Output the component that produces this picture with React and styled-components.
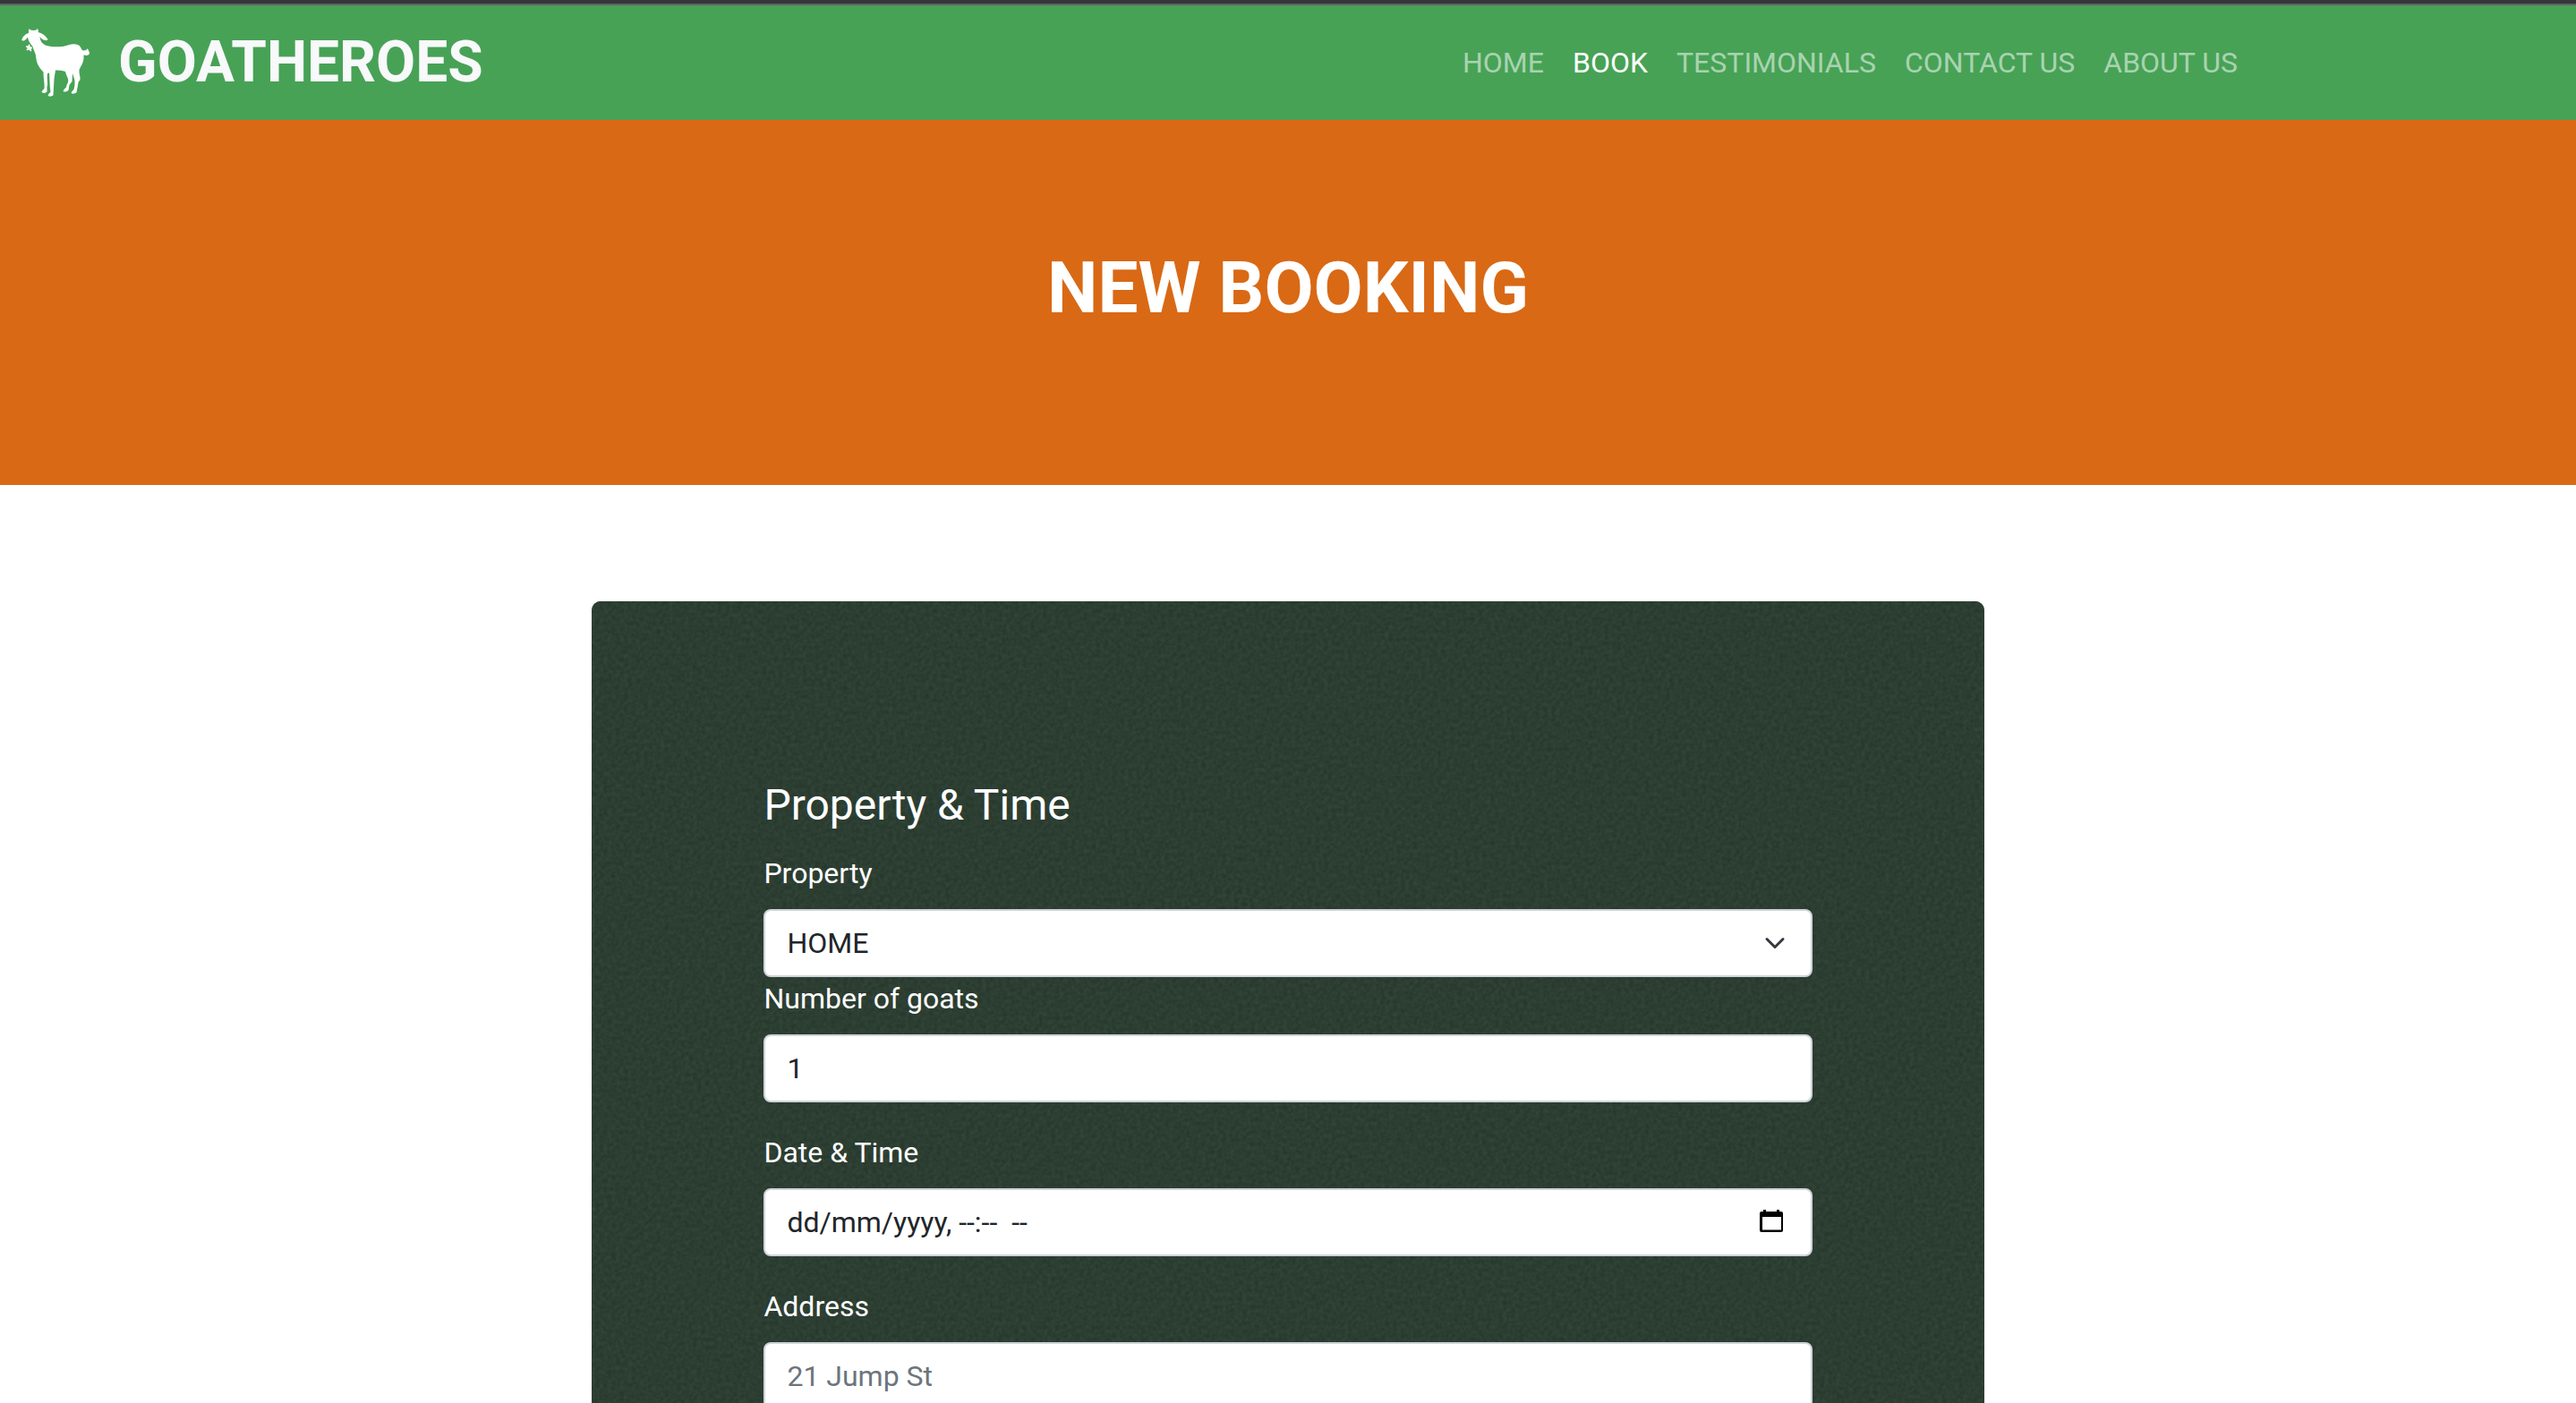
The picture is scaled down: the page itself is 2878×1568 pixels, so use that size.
import React, { useState } from 'react';
import styled, { createGlobalStyle } from 'styled-components';

const GlobalStyle = createGlobalStyle`
  *, *::before, *::after { box-sizing: border-box; }
  body {
    margin: 0;
    background: #fff;
    color: #212529;
    font-family: Roboto, "Liberation Sans", sans-serif;
    font-size: 32px;
    line-height: 48px;
  }
`;

const Page = styled.div`
  height: 100vh;
  overflow-y: auto;
  scrollbar-width: none;
`;

const Header = styled.header`
  border-top: 4px solid #35363a;
`;

const Navbar = styled.nav`
  display: flex;
  align-items: center;
  justify-content: space-between;
  min-height: 130px;
  padding: 0 362px 0 24px;
  border-top: 2px solid #606166;
  background: #47a256;
`;

const Brand = styled.a`
  display: flex;
  align-items: center;
  gap: 28px;
  color: #f8f9fa;
  font-size: 64px;
  font-weight: 700;
  line-height: 96px;
  text-decoration: none;
`;

const NavList = styled.ul`
  display: flex;
  margin: 0;
  padding: 0;
  list-style: none;
`;

const NavLink = styled.a`
  display: block;
  padding: 16px;
  color: ${(p) => (p.$active ? '#fff' : 'rgba(255, 255, 255, 0.55)')};
  text-decoration: none;
`;

const Banner = styled.section`
  padding: 128px 24px 160px;
  background: #d96915;
  color: #fff;
  text-align: center;
`;

const BannerTitle = styled.h1`
  margin: 0;
  font-size: 80px;
  font-weight: 700;
  line-height: 120px;
`;

const Container = styled.main`
  max-width: 2640px;
  margin: 0 auto;
  padding: 130px 24px 0;
`;

const Card = styled.section`
  position: relative;
  width: 60%;
  margin: 0 auto;
  padding: 192px;
  border-radius: 10px;
  overflow: hidden;
  background: #2c3e32;
  color: #fff;
`;

const Texture = styled.svg`
  position: absolute;
  inset: 0;
  width: 100%;
  height: 100%;
`;

const Form = styled.form`
  position: relative;
  display: flex;
  flex-direction: column;
`;

const SectionTitle = styled.h2`
  margin: 0 0 16px;
  font-size: 48px;
  font-weight: 400;
  line-height: 72px;
`;

const Field = styled.div`
  display: flex;
  flex-direction: column;
  gap: 16px;
  margin-bottom: ${(p) => (p.$tight ? '0' : '32px')};
`;

const Control = styled.div`
  display: grid;
  align-items: center;

  > * { grid-area: 1 / 1; }
`;

const Input = styled.input`
  width: 100%;
  height: 76px;
  padding: 12px 24px;
  border: 2px solid #ced4da;
  border-radius: 8px;
  background: #fff;
  color: #212529;
  font: inherit;
  appearance: none;

  &::placeholder {
    color: ${(p) => (p.$darkHint ? '#212529' : '#6c757d')};
    opacity: 1;
  }
  &::-webkit-inner-spin-button { appearance: none; }
`;

const Chevron = styled.svg`
  width: 24px;
  height: 24px;
  margin-right: 30px;
  justify-self: end;
  pointer-events: none;
`;

const PickerButton = styled.button`
  display: flex;
  margin-right: 30px;
  padding: 0;
  border: 0;
  background: none;
  justify-self: end;
`;

function Goat() {
  return (
    <svg width="80" height="80" viewBox="0 -2 80 80" fill="#fff" aria-hidden="true">
      <path d="M8 2.500 L8.500 0 L10 1.500 C12 2 15 2 16.500 1.500 L18 0 L19 2.500 L18.500 4 C23 5 26 7 29.500 12 Q29 14 24.500 12.500 Q22 11.500 20.500 9 C21 14 23 17 28 19 C33 20.500 39 20.500 46 20 C52 19 57 16 63 18 C67 20 66.500 24 69 24.500 L72.500 24 L73 22.500 L74.500 23 L75 25 L76 26.500 L75.500 29 L73 30 L69.500 29.500 C70 38 67 40 64.500 46 C64 50 66 54 65.500 57 L63.500 60 C63 64 62 68 61.500 71.500 Q58 73.500 55.500 72 Q56 70 58.500 68 C59.500 64 60 59 59 56 L57 50 L56.500 59 L53.500 63 L52.500 69 Q49 71.500 46.500 70 Q47 68 50 65.500 C50.500 62 53 60 52 56 Q50 52 49 48 C46 46.500 41 46.500 38 46.500 L36.500 56 L35.500 74.500 Q33 76.500 29.500 75 Q30 72.500 32.500 71 C31.500 64 31.500 57 31 49.500 L29 50 C28 56 30 62 28.500 65 L28.500 70.500 Q26 73 22.500 71 Q23 69 25.500 67 C26 61 24.500 56 24.500 48.500 C19 43 16.500 38 16 30 C15 26 13.500 24 12.500 20 C10 17 7.500 14 7 9.500 L5 12 Q2.500 14.500 .300 13 C1 9 4 6 8 5 Z" />
      <path d="M8 17.500 L9.500 18 L9.500 20 L11.500 20.500 L12 22 L10.500 23 L11.500 25 L10 25.500 L8.500 23.500 L6 24.500 L5.500 23 L7 22 L5 20.500 L5.500 19 L7.500 19.500 Z" />
    </svg>
  );
}

const LINKS = ['HOME', 'BOOK', 'TESTIMONIALS', 'CONTACT US', 'ABOUT US'];

export default function App() {
  const [goats, setGoats] = useState('1');

  return (
    <Page>
      <GlobalStyle />
      <Header>
        <Navbar>
          <Brand href="#">
            <Goat />
            GOATHEROES
          </Brand>
          <NavList>
            {LINKS.map((name) => (
              <li key={name}>
                <NavLink href="#" $active={name === 'BOOK'}>{name}</NavLink>
              </li>
            ))}
          </NavList>
        </Navbar>
      </Header>
      <Banner>
        <BannerTitle>NEW BOOKING</BannerTitle>
      </Banner>
      <Container>
        <Card>
          <Texture aria-hidden="true">
            <filter id="grain" x="0" y="0" width="100%" height="100%" colorInterpolationFilters="sRGB">
              <feTurbulence type="fractalNoise" baseFrequency="0.22" numOctaves="2" stitchTiles="stitch" />
              <feColorMatrix values="0.08 0 0 0 0.133  0.08 0 0 0 0.203  0.08 0 0 0 0.156  0 0 0 0 1" />
            </filter>
            <rect width="100%" height="100%" filter="url(#grain)" />
          </Texture>
          <Form>
            <SectionTitle>Property &amp; Time</SectionTitle>
            <Field $tight>
              <label htmlFor="property">Property</label>
              <Control>
                <Input as="select" id="property" defaultValue="HOME">
                  <option>HOME</option>
                </Input>
                <Chevron viewBox="0 0 16 16" fill="none" stroke="#343a40" strokeWidth="2" strokeLinecap="round" strokeLinejoin="round" aria-hidden="true">
                  <path d="m2 5 6 6 6-6" />
                </Chevron>
              </Control>
            </Field>
            <Field>
              <label htmlFor="goats">Number of goats</label>
              <Input id="goats" type="number" value={goats} onChange={(e) => setGoats(e.target.value)} />
            </Field>
            <Field>
              <label htmlFor="date">Date &amp; Time</label>
              <Control>
                <Input id="date" type="text" placeholder="dd/mm/yyyy, --:--  --" $darkHint />
                <PickerButton type="button" aria-label="Open calendar">
                  <svg width="32" height="32" viewBox="0 0 32 32" aria-hidden="true">
                    <path fill="#000" fillRule="evenodd" d="M7 2h3v2h12V2h3v2h2q2 0 2 2v19q0 2-2 2H5q-2 0-2-2V6q0-2 2-2h2zM6 10v14.500h21V10z" />
                  </svg>
                </PickerButton>
              </Control>
            </Field>
            <Field>
              <label htmlFor="address">Address</label>
              <Input id="address" type="text" placeholder="21 Jump St" />
            </Field>
          </Form>
        </Card>
      </Container>
    </Page>
  );
}
